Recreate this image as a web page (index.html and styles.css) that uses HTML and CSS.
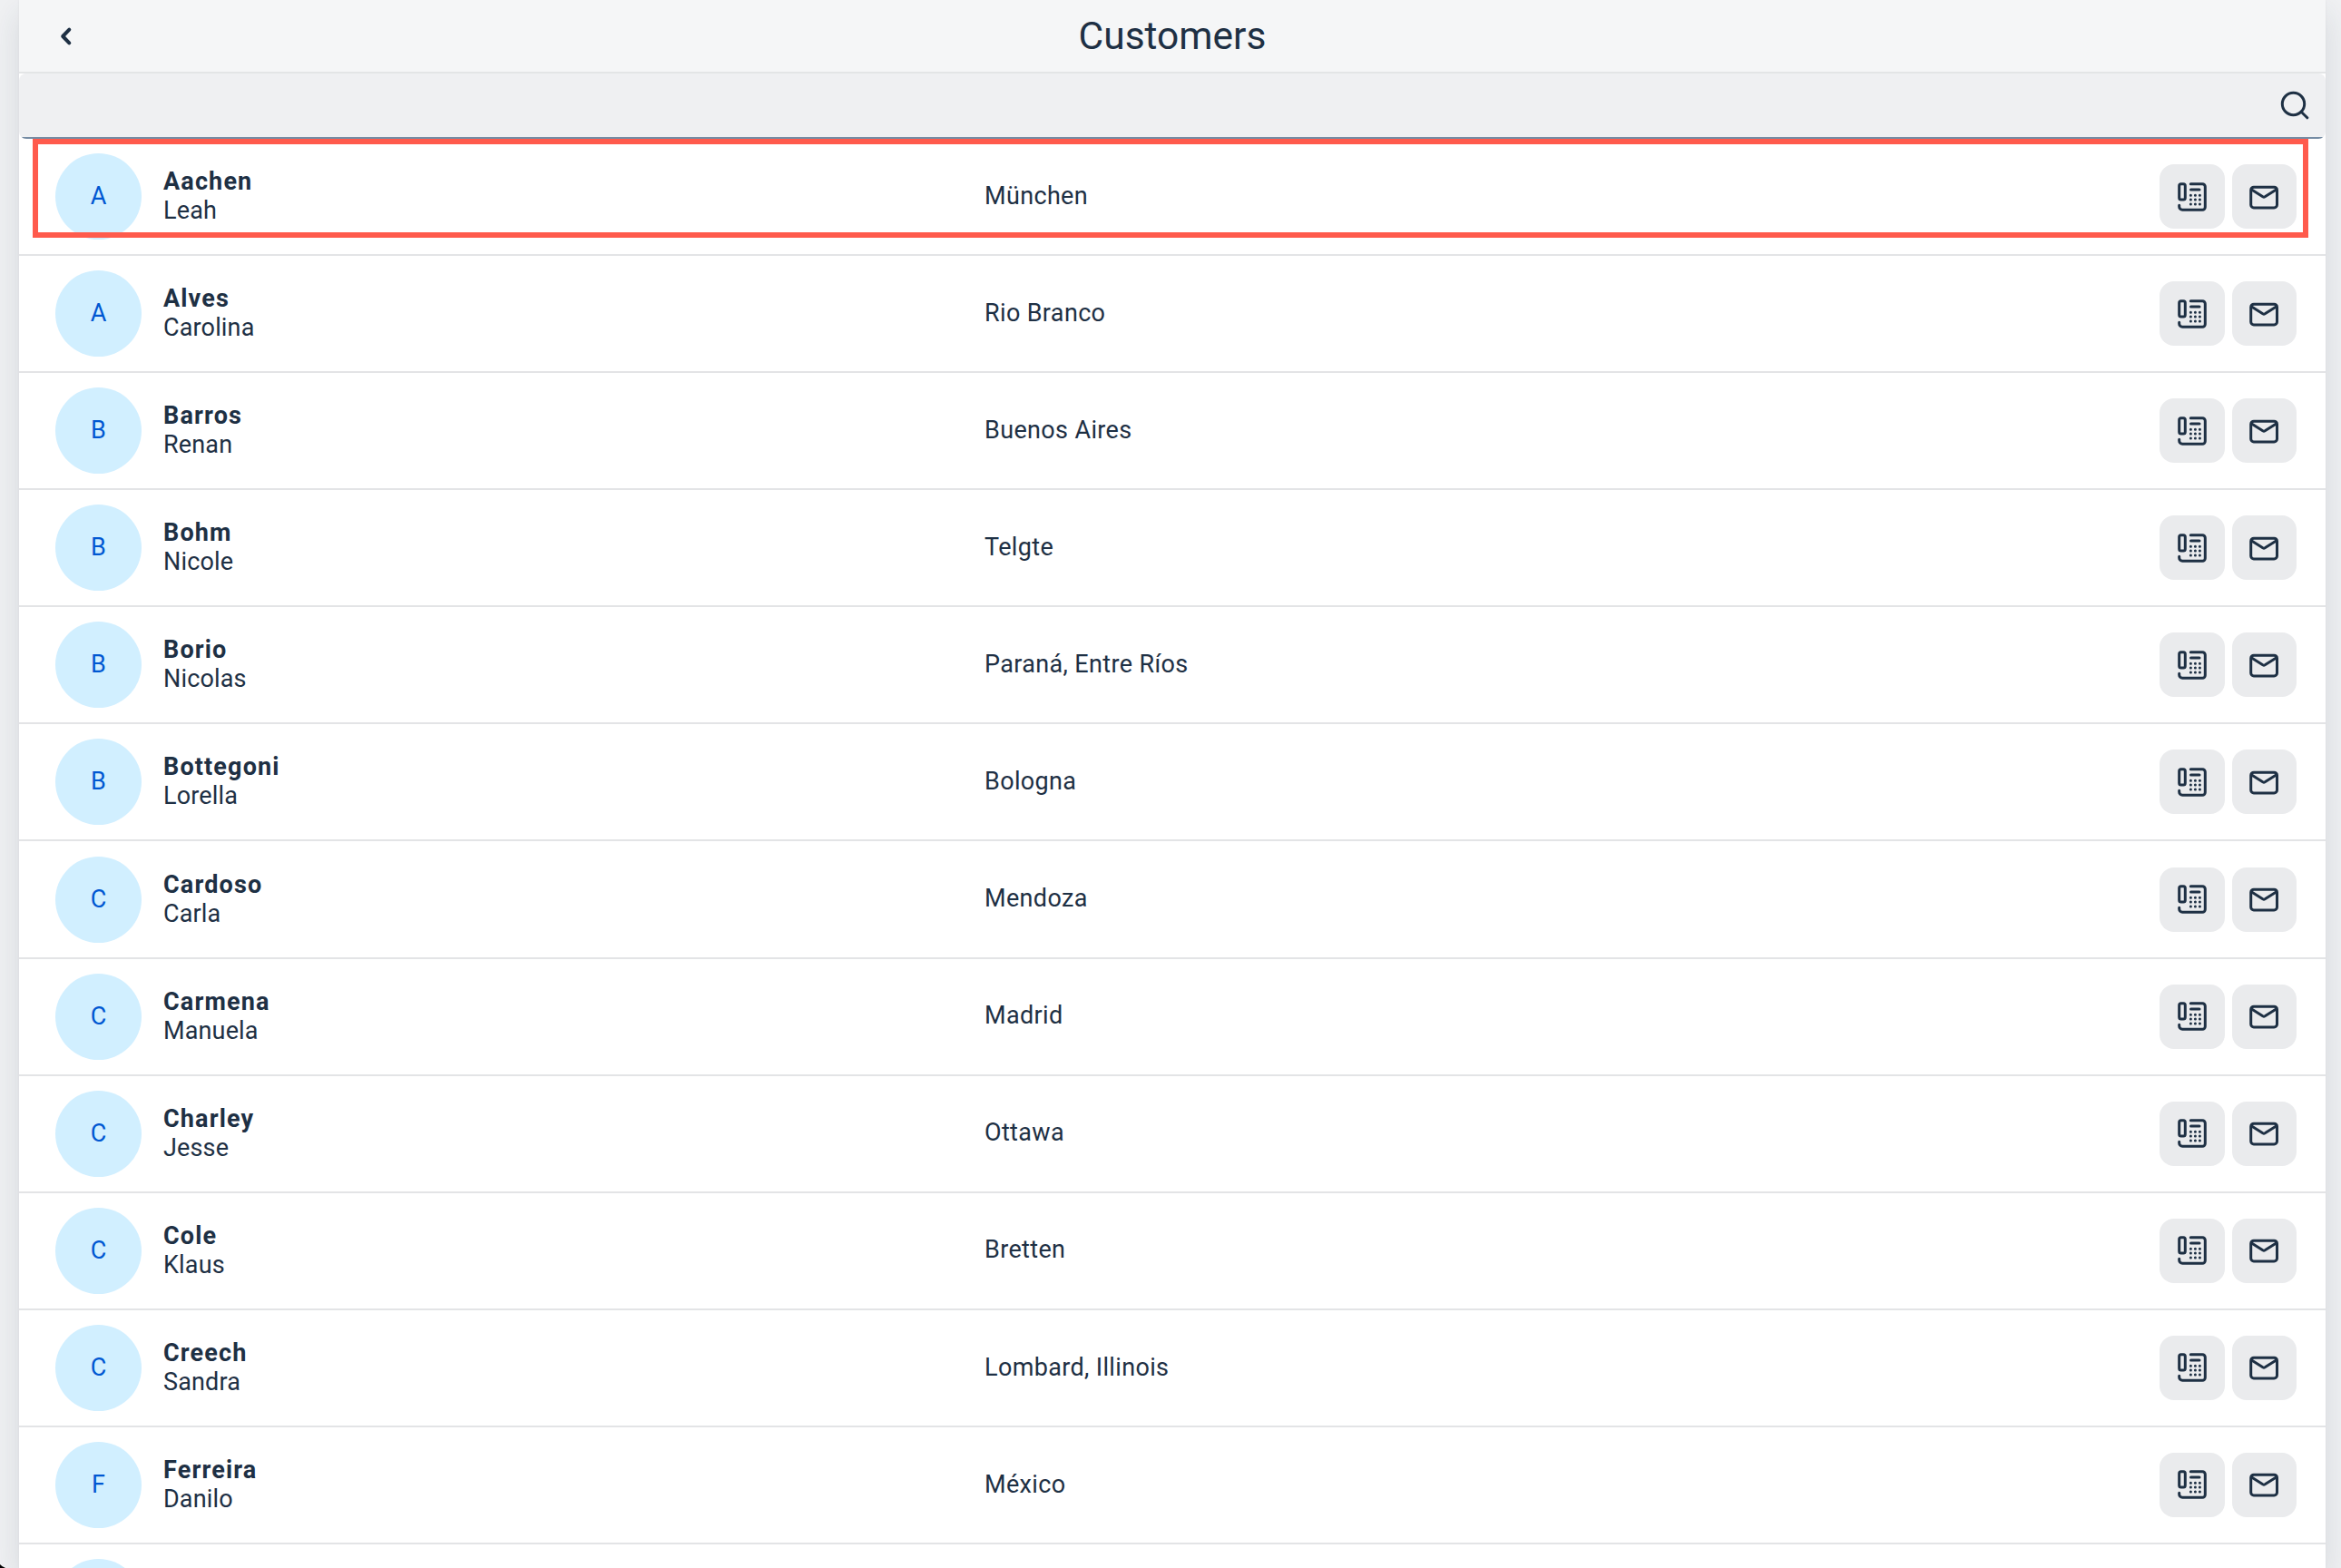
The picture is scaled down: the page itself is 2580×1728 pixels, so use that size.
FILE: index.html
```html
<!DOCTYPE html>
<html lang="en">
<head>
<meta charset="utf-8">
<title>Customers</title>
<link rel="stylesheet" href="styles.css">
</head>
<body>
<svg class="sprite" aria-hidden="true">
  <symbol id="fax" viewBox="0 0 32 32">
    <g fill="none" stroke="currentColor" stroke-width="3" stroke-linecap="round" stroke-linejoin="round">
      <rect x="1.7" y="1.7" width="6.6" height="17.4" rx="2"/>
      <path d="M14.3 1.7H27.3a3 3 0 0 1 3 3V27.3a3 3 0 0 1-3 3H5.2a3.5 3.5 0 0 1-3.5-3.5V25.2"/>
      <path d="M14.5 8H24"/>
    </g>
    <path d="M14.4 14.2h.01M19.4 14.2h.01M24.4 14.2h.01M14.4 19h.01M19.4 19h.01M24.4 19h.01M14.4 24h.01M19.4 24h.01M24.4 24h.01" stroke="currentColor" stroke-width="3" stroke-linecap="round"/>
  </symbol>
  <symbol id="mail" viewBox="0 0 32 32">
    <g fill="none" stroke="currentColor" stroke-width="3" stroke-linecap="round" stroke-linejoin="round">
      <rect x="1.7" y="5.2" width="28.8" height="22.7" rx="3.2"/>
      <path d="M2.5 8L14.8 15.8Q16 16.5 17.2 15.8L29.6 8"/>
    </g>
  </symbol>
</svg>
<main class="page">
  <header class="bar">
    <svg class="back" viewBox="0 0 14 22"><path d="M10.3 3.7L3.2 11L10.3 18.3"/></svg>
    <h1 class="title">Customers</h1>
  </header>
  <div class="search">
    <svg class="search-icon" viewBox="0 0 32 32"><circle cx="14.5" cy="14.5" r="12.2"/><path d="M23.2 23.2L29.8 29.8"/></svg>
  </div>
  <ul class="list">
    <li class="row"><span class="avatar">A</span><div class="name"><b>Aachen</b><span>Leah</span></div><span class="city">München</span><div class="actions"><button><svg><use href="#fax"/></svg></button><button><svg><use href="#mail"/></svg></button></div></li>
    <li class="row"><span class="avatar">A</span><div class="name"><b>Alves</b><span>Carolina</span></div><span class="city">Rio Branco</span><div class="actions"><button><svg><use href="#fax"/></svg></button><button><svg><use href="#mail"/></svg></button></div></li>
    <li class="row"><span class="avatar">B</span><div class="name"><b>Barros</b><span>Renan</span></div><span class="city">Buenos Aires</span><div class="actions"><button><svg><use href="#fax"/></svg></button><button><svg><use href="#mail"/></svg></button></div></li>
    <li class="row"><span class="avatar">B</span><div class="name"><b>Bohm</b><span>Nicole</span></div><span class="city">Telgte</span><div class="actions"><button><svg><use href="#fax"/></svg></button><button><svg><use href="#mail"/></svg></button></div></li>
    <li class="row"><span class="avatar">B</span><div class="name"><b>Borio</b><span>Nicolas</span></div><span class="city">Paraná, Entre Ríos</span><div class="actions"><button><svg><use href="#fax"/></svg></button><button><svg><use href="#mail"/></svg></button></div></li>
    <li class="row"><span class="avatar">B</span><div class="name"><b>Bottegoni</b><span>Lorella</span></div><span class="city">Bologna</span><div class="actions"><button><svg><use href="#fax"/></svg></button><button><svg><use href="#mail"/></svg></button></div></li>
    <li class="row"><span class="avatar">C</span><div class="name"><b>Cardoso</b><span>Carla</span></div><span class="city">Mendoza</span><div class="actions"><button><svg><use href="#fax"/></svg></button><button><svg><use href="#mail"/></svg></button></div></li>
    <li class="row"><span class="avatar">C</span><div class="name"><b>Carmena</b><span>Manuela</span></div><span class="city">Madrid</span><div class="actions"><button><svg><use href="#fax"/></svg></button><button><svg><use href="#mail"/></svg></button></div></li>
    <li class="row"><span class="avatar">C</span><div class="name"><b>Charley</b><span>Jesse</span></div><span class="city">Ottawa</span><div class="actions"><button><svg><use href="#fax"/></svg></button><button><svg><use href="#mail"/></svg></button></div></li>
    <li class="row"><span class="avatar">C</span><div class="name"><b>Cole</b><span>Klaus</span></div><span class="city">Bretten</span><div class="actions"><button><svg><use href="#fax"/></svg></button><button><svg><use href="#mail"/></svg></button></div></li>
    <li class="row"><span class="avatar">C</span><div class="name"><b>Creech</b><span>Sandra</span></div><span class="city">Lombard, Illinois</span><div class="actions"><button><svg><use href="#fax"/></svg></button><button><svg><use href="#mail"/></svg></button></div></li>
    <li class="row"><span class="avatar">F</span><div class="name"><b>Ferreira</b><span>Danilo</span></div><span class="city">México</span><div class="actions"><button><svg><use href="#fax"/></svg></button><button><svg><use href="#mail"/></svg></button></div></li>
    <li class="row"><span class="avatar"></span></li>
  </ul>
</main>
<div class="highlight"></div>
<svg class="corner" viewBox="0 0 6 4"><path d="M0 0Q2 2.5 6 4H0Z"/></svg>
</body>
</html>
```
FILE: styles.css
```css
* { box-sizing: border-box; }
body {
  margin: 0;
  height: 1728px;
  overflow: hidden;
  position: relative;
  background: #f0f1f3;
  color: #1e3044;
  font: 27px/32px Roboto, sans-serif;
}
.sprite { position: absolute; width: 0; height: 0; }
.page {
  width: 2542px;
  height: 1728px;
  margin-left: 21px;
  overflow: hidden;
  background: #fff;
  box-shadow: 0 0 2px #dcdee0, 0 14px 34px rgba(34, 53, 72, .13);
}
.bar {
  display: grid;
  grid-template-columns: 100px 1fr 100px;
  align-items: center;
  height: 81px;
  background: #f5f6f7;
  border-bottom: 2px solid #e3e5e6;
}
.back {
  width: 14px;
  height: 22px;
  margin-left: 45px;
  fill: none;
  stroke: currentColor;
  stroke-width: 4;
  stroke-linecap: round;
  stroke-linejoin: round;
}
.title {
  margin: 0;
  text-align: center;
  font-size: 42.5px;
  line-height: 50px;
  font-weight: 400;
}
.search {
  display: flex;
  justify-content: flex-end;
  align-items: center;
  height: 72px;
  padding: 0 18px 2px 0;
  border-radius: 8px;
  background: linear-gradient(#758ca4, #758ca4) center bottom / calc(100% - 6px) 2px no-repeat #eff0f2;
}
.search-icon {
  width: 32px;
  height: 32px;
  fill: none;
  stroke: currentColor;
  stroke-width: 3;
  stroke-linecap: round;
}
.list { margin: 0; padding: 0; list-style: none; }
.row {
  display: grid;
  grid-template-columns: 119px 905px 1fr auto;
  align-items: center;
  height: 129.08px;
  padding: 0 32px 0 40px;
  border-bottom: 2px solid #e3e4e6;
}
.avatar {
  display: flex;
  align-items: center;
  justify-content: center;
  width: 95px;
  height: 95px;
  padding-bottom: 1px;
  border-radius: 50%;
  background: #d1efff;
  color: #0057d2;
}
.name {
  display: flex;
  flex-direction: column;
  padding-bottom: 1px;
}
.name b { letter-spacing: 1.15px; }
.name span { letter-spacing: .15px; }
.city {
  padding-bottom: 1.5px;
  letter-spacing: .35px;
}
.actions { display: flex; gap: 8px; }
.actions button {
  display: grid;
  place-items: center;
  width: 71.5px;
  height: 71px;
  padding: 0;
  border: 0;
  border-radius: 16px;
  background: #eaebed;
  color: inherit;
}
.actions svg { width: 32px; height: 32px; }
.highlight {
  position: absolute;
  left: 36px;
  top: 153px;
  width: 2508px;
  height: 109px;
  border: 6px solid #ff5a4c;
}
.corner { position: absolute; left: 0; top: 1724px; width: 6px; height: 4px; }
```
